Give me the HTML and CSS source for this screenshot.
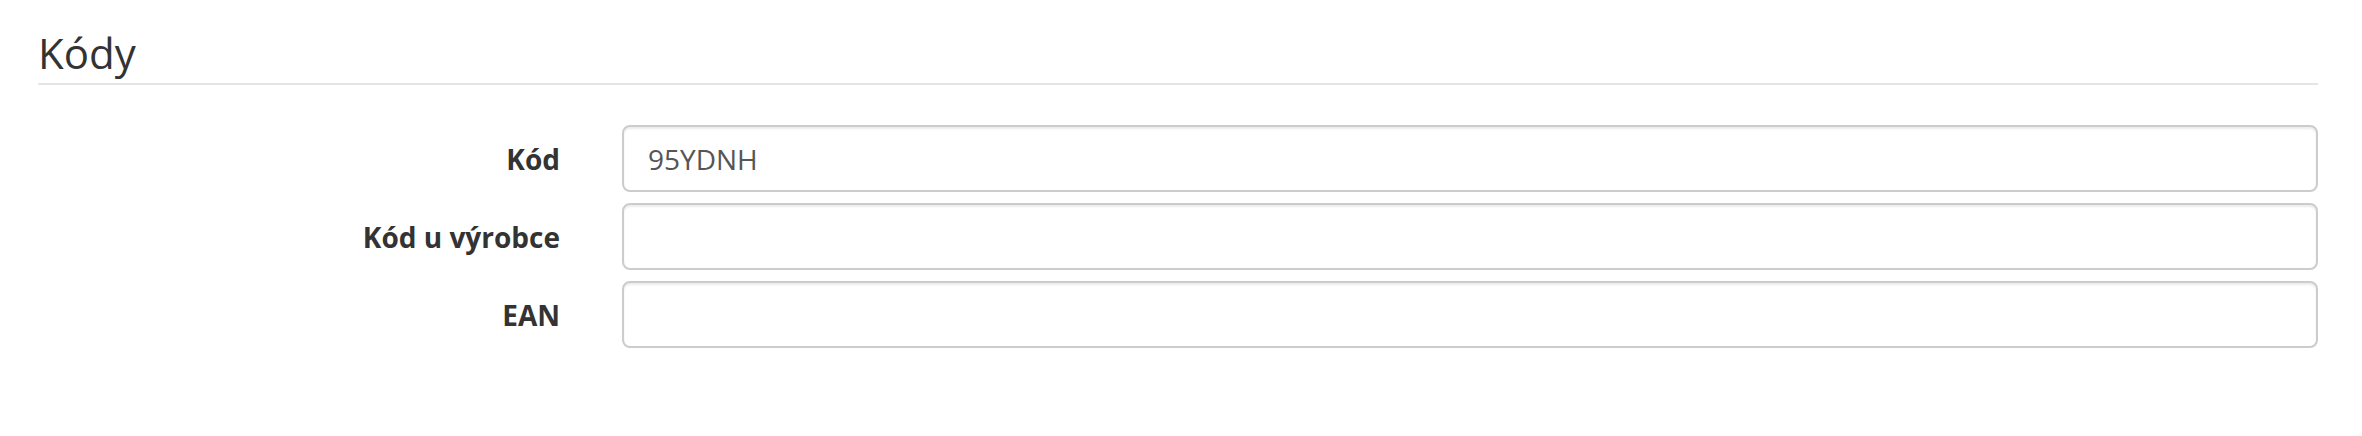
FILE: index.html
```html
<!DOCTYPE html>
<html lang="cs">
<head>
  <meta charset="UTF-8">
  <meta name="viewport" content="width=device-width, initial-scale=1.0">
  <title>Kódy</title>
  <link rel="stylesheet" href="styles.css">
</head>
<body>
  <div class="container">
    <fieldset class="codes">
      <legend>Kódy</legend>
      <div class="form-group">
        <label for="code">Kód</label>
        <input type="text" id="code" value="95YDNH">
      </div>
      <div class="form-group">
        <label for="maker-code">Kód u výrobce</label>
        <input type="text" id="maker-code">
      </div>
      <div class="form-group">
        <label for="ean">EAN</label>
        <input type="text" id="ean">
      </div>
    </fieldset>
  </div>
</body>
</html>
```

FILE: styles.css
```css
body {
  font-family: "Open Sans", "Liberation Sans", sans-serif;
  margin: 0;
  background-color: #fff;
  color: #333;
}
.container {
  width: 2280px;
  margin-left: 38px;
  padding-top: 23px;
}
.codes {
  border: none;
  margin: 0;
  padding: 0;
  min-width: 0;
}
.codes legend {
  display: block;
  width: 100%;
  padding: 0;
  margin-bottom: 40px;
  font-size: 42px;
  line-height: 60px;
  color: #333;
  border-bottom: 2px solid #e5e5e5;
}
.form-group {
  display: grid;
  grid-template-columns: 522px 1fr;
  column-gap: 62px;
  margin-bottom: 11px;
}
.form-group label {
  text-align: right;
  font-weight: bold;
  font-size: 28px;
  line-height: 40px;
  padding-top: 14px;
}
.form-group input {
  box-sizing: border-box;
  height: 67px;
  width: 100%;
  padding: 12px 24px;
  font-family: inherit;
  font-size: 28px;
  color: #555;
  background-color: #fff;
  border: 2px solid #ccc;
  border-radius: 8px;
  box-shadow: inset 0 2px 2px rgba(0, 0, 0, 0.075);
  outline: none;
}
```
